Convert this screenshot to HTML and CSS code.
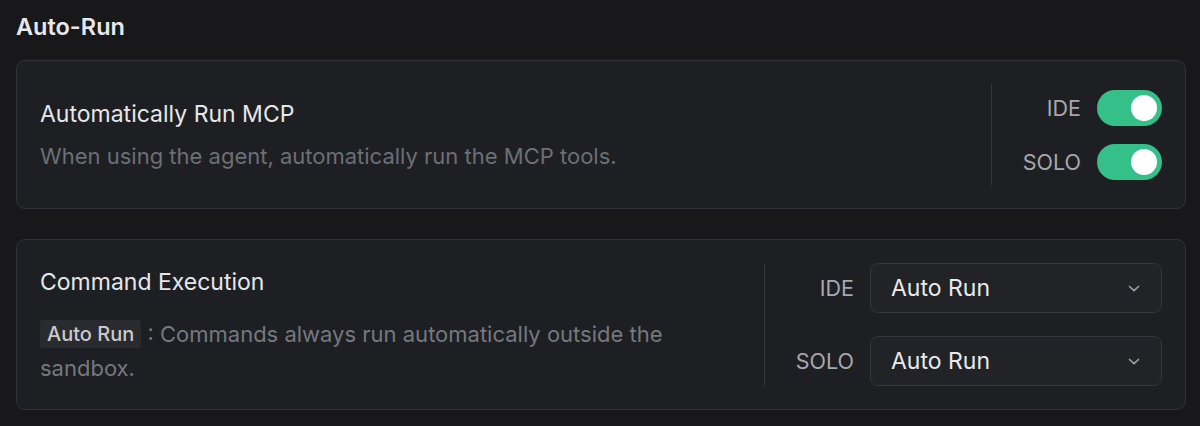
FILE: index.html
```html
<!DOCTYPE html>
<html lang="en">
<head>
<meta charset="utf-8">
<title>Auto-Run</title>
<link rel="stylesheet" href="styles.css">
</head>
<body>
<main class="page">
  <h2 class="section-title">Auto-Run</h2>

  <section class="card card-mcp">
    <div class="card-main main-center">
      <div class="card-title">Automatically Run MCP</div>
      <div class="card-desc">When using the agent, automatically run the MCP tools.</div>
    </div>
    <div class="card-side side-toggles">
      <div class="side-row">
        <span class="side-label">IDE</span>
        <span class="toggle on"><span class="knob"></span></span>
      </div>
      <div class="side-row">
        <span class="side-label">SOLO</span>
        <span class="toggle on"><span class="knob"></span></span>
      </div>
    </div>
  </section>

  <section class="card card-cmd">
    <div class="card-main main-top">
      <div class="card-title">Command Execution</div>
      <div class="card-desc desc-wrap"><span class="chip">Auto Run</span><span class="desc-text"> : Commands always run automatically outside the sandbox.</span></div>
    </div>
    <div class="card-side side-selects">
      <div class="side-row">
        <span class="side-label label-fixed">IDE</span>
        <div class="select">
          <span class="select-value">Auto Run</span>
          <svg class="chev" width="14" height="9" viewBox="0 0 14 9"><path d="M2.5 2.5l4.5 4.2 4.5-4.2" fill="none" stroke="#9a9ca1" stroke-width="1.7" stroke-linecap="round" stroke-linejoin="round"/></svg>
        </div>
      </div>
      <div class="side-row">
        <span class="side-label label-fixed">SOLO</span>
        <div class="select">
          <span class="select-value">Auto Run</span>
          <svg class="chev" width="14" height="9" viewBox="0 0 14 9"><path d="M2.5 2.5l4.5 4.2 4.5-4.2" fill="none" stroke="#9a9ca1" stroke-width="1.7" stroke-linecap="round" stroke-linejoin="round"/></svg>
        </div>
      </div>
    </div>
  </section>
</main>
</body>
</html>
```
FILE: styles.css
```css
* { box-sizing: border-box; }
html, body { margin: 0; padding: 0; }
body {
  background: #18181b;
  font-family: Inter, "Noto Sans", "Liberation Sans", sans-serif;
  color: #e4e5e7;
  width: 1200px;
  height: 426px;
  overflow: hidden;
}
.page {
  padding: 12px 14px 0 16px;
}
.section-title {
  margin: 0;
  font-size: 23.5px;
  font-weight: 600;
  line-height: 30px;
  color: #e8e8ea;
}
.card {
  display: flex;
  align-items: stretch;
  background: #1e1f23;
  border: 1px solid #303237;
  border-radius: 9px;
  padding: 23px;
}
.card-mcp { margin-top: 18px; height: 149px; }
.card-cmd { margin-top: 30px; height: 171px; }
.card-main {
  flex: 1;
  display: flex;
  flex-direction: column;
  padding-right: 24px;
}
.main-center { justify-content: center; }
.main-top { justify-content: flex-start; padding-top: 5px; }
.card-title {
  font-size: 23px;
  line-height: 28px;
  color: #e6e7e9;
}
.card-desc {
  font-size: 22px;
  line-height: 28px;
  color: #6c6f75;
  margin-top: 14px;
}
.desc-wrap {
  line-height: 34px;
  margin-top: 21px;
  color: #75787e;
  max-width: 700px;
}
.chip {
  display: inline-block;
  vertical-align: top;
  margin-top: 3px;
  background: #2a2b2f;
  color: #c9cacd;
  font-weight: 500;
  font-size: 20px;
  line-height: 28px;
  padding: 0 7px;
  border-radius: 3px;
}
.card-side {
  border-left: 1px solid #34363b;
  display: flex;
  flex-direction: column;
  justify-content: center;
}
.side-toggles {
  width: 171px;
  align-items: flex-end;
  gap: 18px;
}
.side-selects {
  width: 398px;
  gap: 23px;
  padding-left: 30px;
}
.side-row {
  display: flex;
  align-items: center;
  justify-content: flex-end;
  gap: 16px;
}
.side-label {
  font-size: 21.5px;
  color: #a6a8ad;
}
.label-fixed {
  flex: 1;
  text-align: right;
}
.toggle {
  width: 65px;
  height: 36px;
  border-radius: 18px;
  background: #2e2f33;
  display: flex;
  align-items: center;
  padding: 0 5px;
}
.toggle.on {
  background: #35bf89;
  justify-content: flex-end;
}
.knob {
  width: 26px;
  height: 26px;
  border-radius: 50%;
  background: #ffffff;
}
.select {
  width: 292px;
  height: 50px;
  background: #222327;
  border: 1px solid #35373c;
  border-radius: 8px;
  display: flex;
  align-items: center;
  justify-content: space-between;
  padding: 0 20px 0 20px;
}
.select-value {
  font-size: 23px;
  color: #e8e9eb;
}
.chev { display: block; }
```
